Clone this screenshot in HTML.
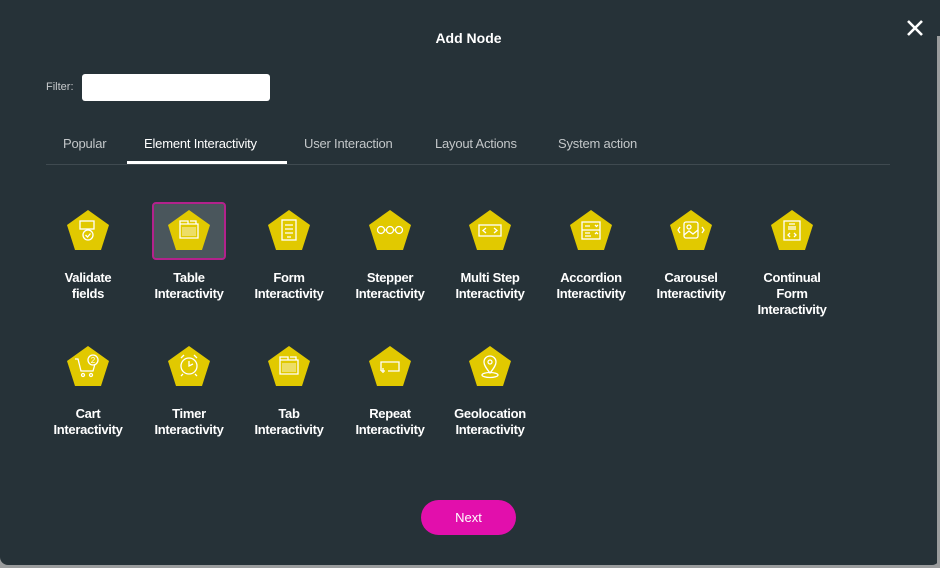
<!DOCTYPE html>
<html><head><meta charset="utf-8"><style>
*{margin:0;padding:0;box-sizing:border-box}
html,body{width:940px;height:568px;overflow:hidden;background:#9a9c9d;font-family:"Liberation Sans",sans-serif}
#dlg{position:absolute;left:0;top:0;width:940px;height:565px;background:#263238;border-radius:0 0 8px 8px}
#sb{position:absolute;left:937px;top:36px;width:3px;height:532px;background:#9a9c9d}
.t{position:absolute;color:#fff}
#title{left:0;width:937px;top:30px;text-align:center;font-weight:bold;font-size:14px}
#x{left:904px;top:17px;width:22px;height:22px}
#flab{left:46px;top:81px;font-size:11px;color:#c8cbcd}
#inp{position:absolute;left:82px;top:74px;width:188px;height:27px;background:#fff;border-radius:3px}
.tab{position:absolute;top:136px;font-size:13px;color:#c3c7c9;letter-spacing:-0.2px}
#line{position:absolute;left:46px;top:164px;width:844px;height:1px;background:#3f4a50}
#ul{position:absolute;left:127px;top:161px;width:160px;height:3px;background:#fff}
#sel{position:absolute;left:152px;top:202px;width:74px;height:58px;background:#4a565c;border:2px solid #b3228c;border-radius:4px}
.it{position:absolute;width:100px;text-align:center}
.it svg{display:block;margin:0 auto}
.lb{color:#fff;font-weight:bold;font-size:13px;line-height:16px;margin-top:20px;letter-spacing:-0.3px}
#next{position:absolute;left:421px;top:500px;width:95px;height:35px;border-radius:18px;background:#e20fac;color:#fff;font-size:13px;text-align:center;line-height:35px}
</style></head><body>
<div id="dlg"></div><div id="sb"></div>
<div class="t" id="title">Add Node</div>
<svg class="t" id="x" viewBox="0 0 22 22"><path d="M4 4L18 18M18 4L4 18" stroke="#fff" stroke-width="2.6"/></svg>
<div class="t" id="flab">Filter:</div><div id="inp"></div>
<div class="tab" style="left:63px">Popular</div>
<div class="tab" style="left:144px;color:#fff">Element Interactivity</div>
<div class="tab" style="left:304px">User Interaction</div>
<div class="tab" style="left:435px">Layout Actions</div>
<div class="tab" style="left:558px">System action</div>
<div id="line"></div><div id="ul"></div>
<div id="sel"></div>

<div class="it" style="left:38px;top:210px"><svg width="42" height="40" viewBox="0 0 42 40"><polygon points="21,0 42,15 34,40 8,40 0,15" fill="#e1c900"/><g fill="none" stroke="#fff" stroke-width="1.3"><rect x="13" y="11" width="14" height="8"/><circle cx="21" cy="25" r="5"/><path d="M18.5 25l2 2 3-3.5"/></g></svg><div class="lb">Validate<br>fields</div></div>
<div class="it" style="left:139px;top:210px"><svg width="42" height="40" viewBox="0 0 42 40"><polygon points="21,0 42,15 34,40 8,40 0,15" fill="#e1c900"/><g fill="none" stroke="#fff" stroke-width="1.3"><path d="M12 14h18v14H12zM12 14v-3h8v3M22 11h6v3"/></g><rect x="14" y="17" width="14" height="9" fill="#fff" opacity=".4"/></svg><div class="lb">Table<br>Interactivity</div></div>
<div class="it" style="left:239px;top:210px"><svg width="42" height="40" viewBox="0 0 42 40"><polygon points="21,0 42,15 34,40 8,40 0,15" fill="#e1c900"/><g fill="none" stroke="#fff" stroke-width="1.3"><rect x="14" y="10" width="14" height="20"/><path d="M17 15h8M17 19h8M17 23h8M19 27h4"/></g></svg><div class="lb">Form<br>Interactivity</div></div>
<div class="it" style="left:340px;top:210px"><svg width="42" height="40" viewBox="0 0 42 40"><polygon points="21,0 42,15 34,40 8,40 0,15" fill="#e1c900"/><g fill="none" stroke="#fff" stroke-width="1.3"><circle cx="12" cy="20" r="3.5"/><circle cx="21" cy="20" r="3.5"/><circle cx="30" cy="20" r="3.5"/><path d="M15.5 20h2M24.5 20h2"/></g></svg><div class="lb">Stepper<br>Interactivity</div></div>
<div class="it" style="left:440px;top:210px"><svg width="42" height="40" viewBox="0 0 42 40"><polygon points="21,0 42,15 34,40 8,40 0,15" fill="#e1c900"/><g fill="none" stroke="#fff" stroke-width="1.3"><rect x="10" y="15" width="22" height="11"/><path d="M17 18l-3 2.5 3 2.5M25 18l3 2.5-3 2.5"/></g></svg><div class="lb">Multi Step<br>Interactivity</div></div>
<div class="it" style="left:541px;top:210px"><svg width="42" height="40" viewBox="0 0 42 40"><polygon points="21,0 42,15 34,40 8,40 0,15" fill="#e1c900"/><g fill="none" stroke="#fff" stroke-width="1.3"><rect x="12" y="12" width="18" height="17"/><path d="M12 20h18M15 16h5M15 23h5M15 26h6M25 15l1.5 1.5 1.5-1.5M25 24l1.5-1.5 1.5 1.5"/></g></svg><div class="lb">Accordion<br>Interactivity</div></div>
<div class="it" style="left:641px;top:210px"><svg width="42" height="40" viewBox="0 0 42 40"><polygon points="21,0 42,15 34,40 8,40 0,15" fill="#e1c900"/><g fill="none" stroke="#fff" stroke-width="1.3"><rect x="14" y="12" width="14" height="16" rx="2"/><circle cx="19" cy="17" r="2"/><path d="M14 25l5-4 4 3 5-4M10 17l-2 3 2 3M32 17l2 3-2 3"/></g></svg><div class="lb">Carousel<br>Interactivity</div></div>
<div class="it" style="left:742px;top:210px"><svg width="42" height="40" viewBox="0 0 42 40"><polygon points="21,0 42,15 34,40 8,40 0,15" fill="#e1c900"/><g fill="none" stroke="#fff" stroke-width="1.3"><rect x="13" y="11" width="16" height="19"/><path d="M18 14h6M17 17h8M17 19h8M19 23l-2 2 2 2M23 23l2 2-2 2"/></g></svg><div class="lb">Continual<br>Form<br>Interactivity</div></div>

<div class="it" style="left:38px;top:346px"><svg width="42" height="40" viewBox="0 0 42 40"><polygon points="21,0 42,15 34,40 8,40 0,15" fill="#e1c900"/><g fill="none" stroke="#fff" stroke-width="1.3"><path d="M8 13h3l3 12h12l2-7"/><circle cx="16" cy="29" r="1.5"/><circle cx="24" cy="29" r="1.5"/><circle cx="26" cy="14" r="5"/></g><text x="26" y="17" font-size="8" fill="#fff" text-anchor="middle" font-family="Liberation Sans">2</text></svg><div class="lb">Cart<br>Interactivity</div></div>
<div class="it" style="left:139px;top:346px"><svg width="42" height="40" viewBox="0 0 42 40"><polygon points="21,0 42,15 34,40 8,40 0,15" fill="#e1c900"/><g fill="none" stroke="#fff" stroke-width="1.3"><circle cx="21" cy="20" r="8"/><path d="M21 15v5l4-2M13 12l3-3M29 12l-3-3M15 28l-2 2M27 28l2 2"/></g></svg><div class="lb">Timer<br>Interactivity</div></div>
<div class="it" style="left:239px;top:346px"><svg width="42" height="40" viewBox="0 0 42 40"><polygon points="21,0 42,15 34,40 8,40 0,15" fill="#e1c900"/><g fill="none" stroke="#fff" stroke-width="1.3"><path d="M12 14h18v14H12zM12 14v-3h8v3M22 11h6v3"/></g><rect x="14" y="17" width="14" height="9" fill="#fff" opacity=".4"/></svg><div class="lb">Tab<br>Interactivity</div></div>
<div class="it" style="left:340px;top:346px"><svg width="42" height="40" viewBox="0 0 42 40"><polygon points="21,0 42,15 34,40 8,40 0,15" fill="#e1c900"/><g fill="none" stroke="#fff" stroke-width="1.3"><path d="M12 25v-9h18v9h-11M14 22v5M12 25h4"/></g></svg><div class="lb">Repeat<br>Interactivity</div></div>
<div class="it" style="left:440px;top:346px"><svg width="42" height="40" viewBox="0 0 42 40"><polygon points="21,0 42,15 34,40 8,40 0,15" fill="#e1c900"/><g fill="none" stroke="#fff" stroke-width="1.3"><path d="M21 27c-4-5-6-8-6-11a6 6 0 0 1 12 0c0 3-2 6-6 11z"/><circle cx="21" cy="16" r="2"/><ellipse cx="21" cy="29" rx="8" ry="2.5"/></g></svg><div class="lb">Geolocation<br>Interactivity</div></div>

<div id="next">Next</div>
</body></html>
